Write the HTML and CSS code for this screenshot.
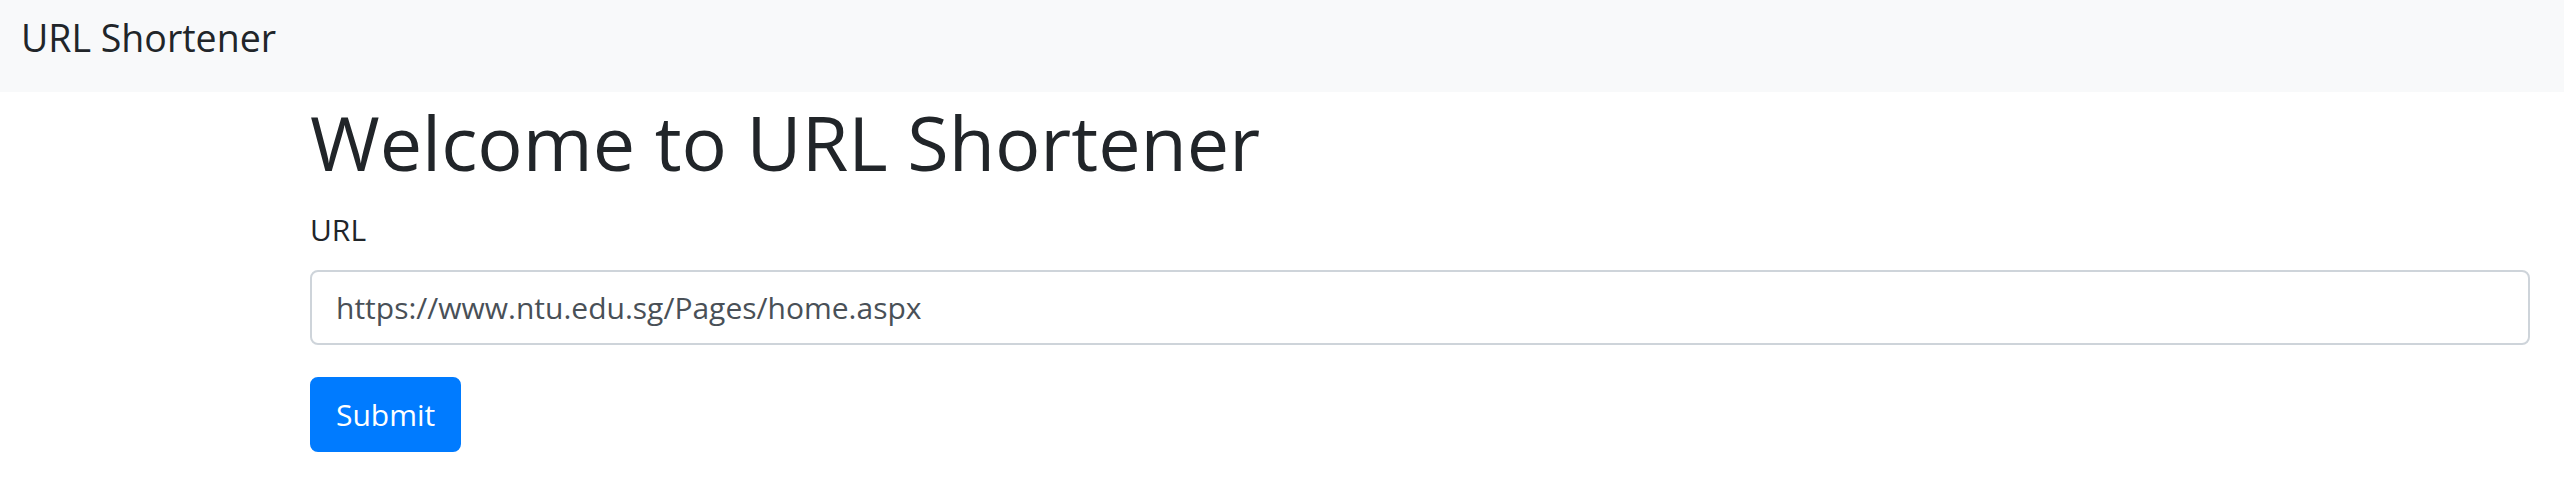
FILE: index.html
```html
<!DOCTYPE html>
<html>
<head>
<meta charset="utf-8">
<link rel="stylesheet" href="styles.css">
</head>
<body>
<nav class="navbar"><span class="brand">URL Shortener</span></nav>
<main class="container">
  <h1 class="title">Welcome to URL Shortener</h1>
  <form class="form">
    <div class="group">
      <label class="label" for="url">URL</label>
      <input class="input" id="url" type="text" value="https://www.ntu.edu.sg/Pages/home.aspx">
    </div>
    <div><button class="btn" type="button">Submit</button></div>
  </form>
</main>
</body>
</html>
```
FILE: styles.css
```css
* { box-sizing: border-box; }
html, body { margin: 0; background: #fff; }
body { font-family: "Open Sans", "Noto Sans", sans-serif; color: #212529; }
.navbar { height: 92px; background: #f8f9fa; display: flex; align-items: flex-start; padding: 19px 0 0 21px; }
.brand { font-size: 37.5px; line-height: 1; color: #212529; }
.container { padding: 2px 34px 0 310px; }
.title { margin: 0 0 16px; font-size: 75.5px; font-weight: 400; line-height: 96px; }
.group { display: flex; flex-direction: column; margin-bottom: 32px; }
.label { font-size: 30px; line-height: 48px; margin-bottom: 16px; }
.input { height: 75px; border: 2px solid #ced4da; border-radius: 8px; padding: 0 24px; font-family: inherit; font-size: 30px; color: #495057; width: 100%; }
.btn { height: 75px; padding: 0 24px; background: #007bff; color: #fff; border: 2px solid #007bff; border-radius: 8px; font-family: inherit; font-size: 30px; }
```
